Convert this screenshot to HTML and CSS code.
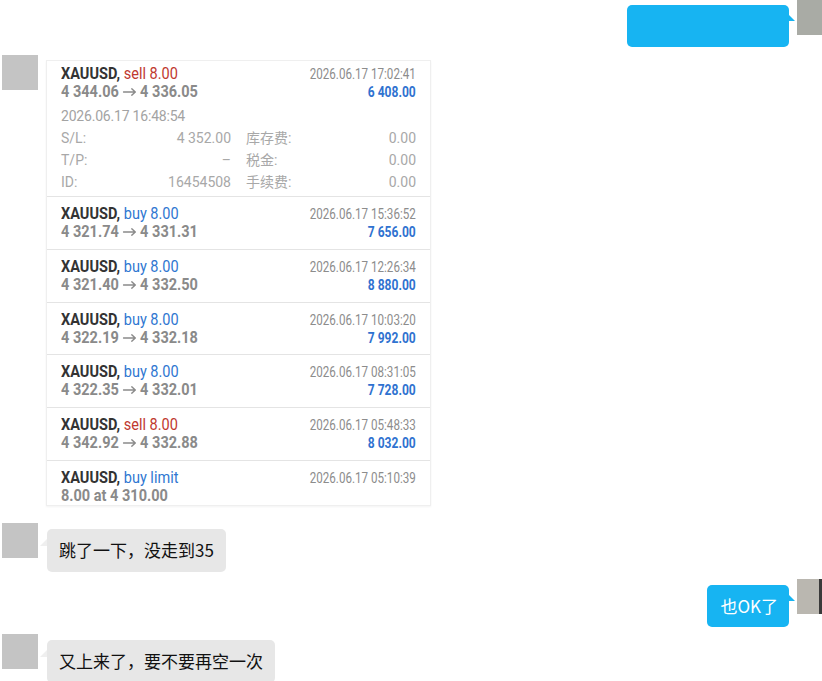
FILE: index.html
```html
<!DOCTYPE html>
<html lang="zh-CN">
<head>
<meta charset="utf-8">
<title>Chat</title>
<link rel="stylesheet" href="styles.css">
</head>
<body>
<div class="chat">
  <div class="msg msg-right first">
    <div class="avatar avatar-r1"></div>
    <div class="bubble bubble-blue bubble-blank"><span class="tail tail-right"></span></div>
  </div>

  <div class="msg msg-left">
    <div class="avatar avatar-l"></div>
    <div class="card">
      <div class="row row-open">
        <div class="line">
          <span class="sym">XAUUSD, <span class="sell">sell 8.00</span></span>
          <span class="time">2026.06.17 17:02:41</span>
        </div>
        <div class="line">
          <span class="price">4 344.06 <svg class="arrow" viewBox="0 0 16 10" width="16" height="10"><path d="M1 5H14.5M10.5 1.8L14.5 5L10.5 8.2"/></svg> 4 336.05</span>
          <span class="profit">6 408.00</span>
        </div>
        <div class="open-time">2026.06.17 16:48:54</div>
        <div class="details">
          <div class="pair"><span>S/L:</span><span>4 352.00</span></div>
          <div class="pair"><span>库存费:</span><span>0.00</span></div>
          <div class="pair"><span>T/P:</span><span>–</span></div>
          <div class="pair"><span>税金:</span><span>0.00</span></div>
          <div class="pair"><span>ID:</span><span>16454508</span></div>
          <div class="pair"><span>手续费:</span><span>0.00</span></div>
        </div>
      </div>
      <div class="row">
        <div class="line"><span class="sym">XAUUSD, <span class="buy">buy 8.00</span></span><span class="time">2026.06.17 15:36:52</span></div>
        <div class="line"><span class="price">4 321.74 <svg class="arrow" viewBox="0 0 16 10" width="16" height="10"><path d="M1 5H14.5M10.5 1.8L14.5 5L10.5 8.2"/></svg> 4 331.31</span><span class="profit">7 656.00</span></div>
      </div>
      <div class="row">
        <div class="line"><span class="sym">XAUUSD, <span class="buy">buy 8.00</span></span><span class="time">2026.06.17 12:26:34</span></div>
        <div class="line"><span class="price">4 321.40 <svg class="arrow" viewBox="0 0 16 10" width="16" height="10"><path d="M1 5H14.5M10.5 1.8L14.5 5L10.5 8.2"/></svg> 4 332.50</span><span class="profit">8 880.00</span></div>
      </div>
      <div class="row">
        <div class="line"><span class="sym">XAUUSD, <span class="buy">buy 8.00</span></span><span class="time">2026.06.17 10:03:20</span></div>
        <div class="line"><span class="price">4 322.19 <svg class="arrow" viewBox="0 0 16 10" width="16" height="10"><path d="M1 5H14.5M10.5 1.8L14.5 5L10.5 8.2"/></svg> 4 332.18</span><span class="profit">7 992.00</span></div>
      </div>
      <div class="row">
        <div class="line"><span class="sym">XAUUSD, <span class="buy">buy 8.00</span></span><span class="time">2026.06.17 08:31:05</span></div>
        <div class="line"><span class="price">4 322.35 <svg class="arrow" viewBox="0 0 16 10" width="16" height="10"><path d="M1 5H14.5M10.5 1.8L14.5 5L10.5 8.2"/></svg> 4 332.01</span><span class="profit">7 728.00</span></div>
      </div>
      <div class="row">
        <div class="line"><span class="sym">XAUUSD, <span class="sell">sell 8.00</span></span><span class="time">2026.06.17 05:48:33</span></div>
        <div class="line"><span class="price">4 342.92 <svg class="arrow" viewBox="0 0 16 10" width="16" height="10"><path d="M1 5H14.5M10.5 1.8L14.5 5L10.5 8.2"/></svg> 4 332.88</span><span class="profit">8 032.00</span></div>
      </div>
      <div class="row row-last">
        <div class="line"><span class="sym">XAUUSD, <span class="buy">buy limit</span></span><span class="time">2026.06.17 05:10:39</span></div>
        <div class="line"><span class="price">8.00 at 4 310.00</span></div>
      </div>
    </div>
  </div>

  <div class="msg msg-left">
    <div class="avatar avatar-l"></div>
    <div class="bubble bubble-grey"><span class="tail tail-left"></span>跳了一下，没走到35</div>
  </div>

  <div class="msg msg-right">
    <div class="avatar avatar-r2"></div>
    <div class="bubble bubble-blue"><span class="tail tail-right"></span>也OK了</div>
  </div>

  <div class="msg msg-left">
    <div class="avatar avatar-l"></div>
    <div class="bubble bubble-grey"><span class="tail tail-left"></span>又上来了，要不要再空一次</div>
  </div>
</div>
</body>
</html>
```

FILE: styles.css
```css
html, body {
  margin: 0;
  padding: 0;
  background: #ffffff;
  overflow: hidden;
}

body {
  width: 822px;
  height: 681px;
  font-family: "Noto Sans CJK SC", "Microsoft YaHei", sans-serif;
}

.chat {
  display: flex;
  flex-direction: column;
  gap: 7px;
}

.msg {
  display: flex;
  align-items: flex-start;
}

.msg-left {
  padding-left: 2px;
  gap: 8px;
}

.msg-right {
  flex-direction: row-reverse;
  gap: 8px;
}

.msg.first {
  margin-bottom: 1px;
}

.avatar {
  width: 36px;
  height: 35px;
  flex: none;
}

.avatar-l {
  background: #c4c4c4;
}

.avatar-r1 {
  background: #a9aba5;
  margin-right: -11px;
}

.avatar-r2 {
  background: linear-gradient(to right, #bab7b0 0, #bab7b0 22px, #3a3a3a 22px, #3a3a3a 25px, #bab7b0 25px);
  margin-right: -11px;
}

.bubble {
  position: relative;
  margin-top: 6px;
  border-radius: 5px;
  font-size: 17px;
  line-height: 24px;
  padding: 9px 12px 10px 12px;
  white-space: nowrap;
}

.msg-left .bubble {
  margin-left: 1px;
}

.bubble-grey {
  background: #e7e7e7;
  color: #111111;
}

.bubble-blue {
  background: #17b4f2;
  color: #ffffff;
  padding: 9px 11px 9px 13px;
}

.bubble-blank {
  width: 138px;
  height: 24px;
  margin-top: 5px;
}

.tail {
  position: absolute;
  width: 0;
  height: 0;
}

.tail-right {
  right: -6px;
  top: 9px;
  border-left: 7px solid #17b4f2;
  border-top: 7px solid transparent;
}

.tail-left {
  left: -7px;
  top: 10px;
  border-right: 7px solid #efefef;
  border-top: 7px solid transparent;
}

/* trade card */
.card {
  margin-top: 5px;
  margin-bottom: 10px;
  width: 383px;
  background: #ffffff;
  border: 1px solid #efefef;
  box-shadow: 0 1px 2px rgba(0, 0, 0, 0.05);
  font-family: Roboto, "Noto Sans", sans-serif;
}

.row {
  padding: 8px 14px 7.8px 14px;
  border-top: 1px solid #e4e4e4;
}

.row-open {
  border-top: none;
  padding-top: 4px;
  padding-bottom: 3px;
}

.row-last {
  padding-bottom: 0;
}

.line {
  display: flex;
  justify-content: space-between;
  align-items: baseline;
  height: 18px;
  line-height: 18px;
  white-space: nowrap;
}

.sym,
.price {
  display: inline-block;
  transform: scaleX(0.88);
  transform-origin: left center;
}

.time,
.profit {
  display: inline-block;
  transform: scaleX(0.83);
  transform-origin: right center;
}

.sym {
  font-size: 16.5px;
  font-weight: 700;
  color: #333333;
}

.sell {
  font-weight: 400;
  color: #c0392f;
}

.buy {
  font-weight: 400;
  color: #2f77d1;
}

.price {
  font-size: 16.5px;
  font-weight: 700;
  color: #8a8a8a;
}

.arrow {
  display: inline-block;
  vertical-align: baseline;
  fill: none;
  stroke: #8a8a8a;
  stroke-width: 1.5;
  stroke-linecap: round;
  stroke-linejoin: round;
}

.time {
  font-size: 14px;
  color: #8c8c8c;
}

.profit {
  font-size: 14.5px;
  font-weight: 700;
  color: #2f72d0;
}

.open-time {
  margin-top: 4px;
  font-size: 14px;
  line-height: 22px;
  color: #a3a3a3;
  letter-spacing: -0.2px;
}

.details {
  display: grid;
  grid-template-columns: 1fr 1fr;
  column-gap: 15px;
  font-size: 14px;
  line-height: 22px;
  color: #a8a8a8;
}

.pair {
  display: flex;
  justify-content: space-between;
}
```
